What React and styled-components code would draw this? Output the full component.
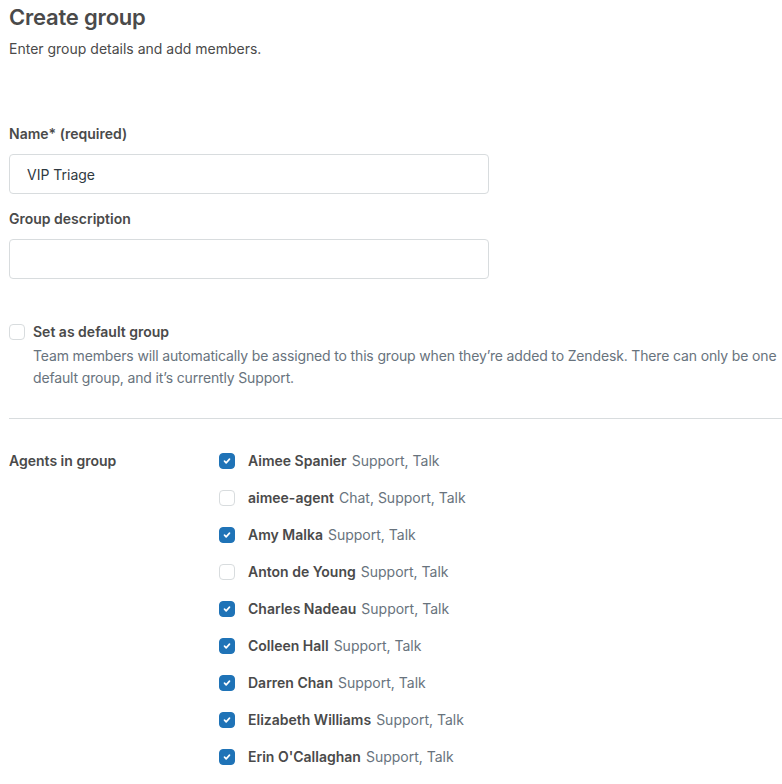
import React from 'react';
import styled, { createGlobalStyle } from 'styled-components';

const COLORS = {
  text: '#49545c',
  heading: '#4a4a4a',
  muted: '#68737d',
  border: '#d8dcde',
  blue: '#1f73b7',
};

const AGENTS = [
  { id: 'aimee-spanier', name: 'Aimee Spanier', roles: 'Support, Talk', checked: true },
  { id: 'aimee-agent', name: 'aimee-agent', roles: 'Chat, Support, Talk', checked: false },
  { id: 'amy-malka', name: 'Amy Malka', roles: 'Support, Talk', checked: true },
  { id: 'anton-de-young', name: 'Anton de Young', roles: 'Support, Talk', checked: false },
  { id: 'charles-nadeau', name: 'Charles Nadeau', roles: 'Support, Talk', checked: true },
  { id: 'colleen-hall', name: 'Colleen Hall', roles: 'Support, Talk', checked: true },
  { id: 'darren-chan', name: 'Darren Chan', roles: 'Support, Talk', checked: true },
  { id: 'elizabeth-williams', name: 'Elizabeth Williams', roles: 'Support, Talk', checked: true },
  { id: 'erin-ocallaghan', name: "Erin O'Callaghan", roles: 'Support, Talk', checked: true },
];

const GlobalStyle = createGlobalStyle`
  body {
    margin: 0;
    background: #fff;
    font-family: Inter, "Noto Sans", sans-serif;
    color: ${COLORS.text};
  }
`;

const Checkbox = ({ checked }) => (
  <Box checked={checked}>
    {checked && (
      <svg width="10" height="10" viewBox="0 0 12 12">
        <path
          d="M3 6.2l2 2 4-4.4"
          fill="none"
          stroke="#fff"
          strokeWidth="2"
          strokeLinecap="round"
          strokeLinejoin="round"
        />
      </svg>
    )}
  </Box>
);

const App = () => {
  const [agents, setAgents] = React.useState(AGENTS);

  const toggle = id =>
    setAgents(list =>
      list.map(a => (a.id === id ? { ...a, checked: !a.checked } : a))
    );

  return (
    <Page>
      <GlobalStyle />
      <Title>Create group</Title>
      <Subtitle>Enter group details and add members.</Subtitle>

      <Field>
        <Label>Name* (required)</Label>
        <Input defaultValue="VIP Triage" />
      </Field>

      <Field compact>
        <Label>Group description</Label>
        <Input />
      </Field>

      <DefaultOption>
        <Checkbox checked={false} />
        <div>
          <OptionLabel>Set as default group</OptionLabel>
          <Hint>
            Team members will automatically be assigned to this group when
            they’re added to Zendesk. There can only be one default group, and
            it’s currently Support.
          </Hint>
        </div>
      </DefaultOption>

      <Divider />

      <AgentsSection>
        <SectionLabel>Agents in group</SectionLabel>
        <AgentList>
          {agents.map(({ id, name, roles, checked }) => (
            <AgentRow key={id} onClick={() => toggle(id)}>
              <Checkbox checked={checked} />
              <AgentName>{name}</AgentName>
              <AgentRoles>{roles}</AgentRoles>
            </AgentRow>
          ))}
        </AgentList>
      </AgentsSection>
    </Page>
  );
};

const Page = styled.div`
  padding: 3px 0 0 9px;
  font-size: 14px;
`;

const Title = styled.h1`
  margin: 0;
  font-size: 22px;
  line-height: 28px;
  font-weight: 600;
  color: ${COLORS.heading};
  letter-spacing: -0.2px;
`;

const Subtitle = styled.p`
  margin: 7px 0 0;
  line-height: 22px;
  color: ${COLORS.heading};
`;

const Field = styled.div`
  display: flex;
  flex-direction: column;
  gap: 9px;
  margin-top: ${p => (p.compact ? '14px' : '63px')};
`;

const Label = styled.label`
  font-weight: 600;
  line-height: 22px;
  color: ${COLORS.heading};
`;

const Input = styled.input`
  box-sizing: border-box;
  width: 480px;
  height: 40px;
  padding: 0 17px;
  border: 1px solid ${COLORS.border};
  border-radius: 4px;
  font-family: inherit;
  font-size: 14px;
  color: #2f3941;
  outline: none;
`;

const DefaultOption = styled.div`
  display: flex;
  align-items: flex-start;
  gap: 8px;
  margin-top: 42px;
`;

const Box = styled.span`
  box-sizing: border-box;
  flex: none;
  display: flex;
  align-items: center;
  justify-content: center;
  width: 16px;
  height: 16px;
  margin-top: 3px;
  border-radius: 4px;
  border: 1px solid ${p => (p.checked ? COLORS.blue : COLORS.border)};
  background: ${p => (p.checked ? COLORS.blue : '#fff')};
`;

const OptionLabel = styled.div`
  font-weight: 600;
  line-height: 22px;
  color: ${COLORS.heading};
`;

const Hint = styled.p`
  margin: 2px 0 0;
  line-height: 22px;
  letter-spacing: -0.15px;
  color: ${COLORS.muted};
`;

const Divider = styled.hr`
  margin: 29px 0 0;
  border: none;
  border-top: 1px solid ${COLORS.border};
`;

const AgentsSection = styled.div`
  display: flex;
  padding-top: 31px;
`;

const SectionLabel = styled.div`
  width: 210px;
  font-weight: 600;
  line-height: 22px;
  color: ${COLORS.heading};
`;

const AgentList = styled.div`
  display: flex;
  flex-direction: column;
  gap: 15px;
`;

const AgentRow = styled.div`
  display: flex;
  align-items: flex-start;
  line-height: 22px;
  cursor: pointer;

  ${Box} {
    margin-right: 13px;
  }
`;

const AgentName = styled.span`
  font-weight: 600;
  color: ${COLORS.heading};
  margin-right: 5px;
`;

const AgentRoles = styled.span`
  color: ${COLORS.muted};
`;

export default App;
